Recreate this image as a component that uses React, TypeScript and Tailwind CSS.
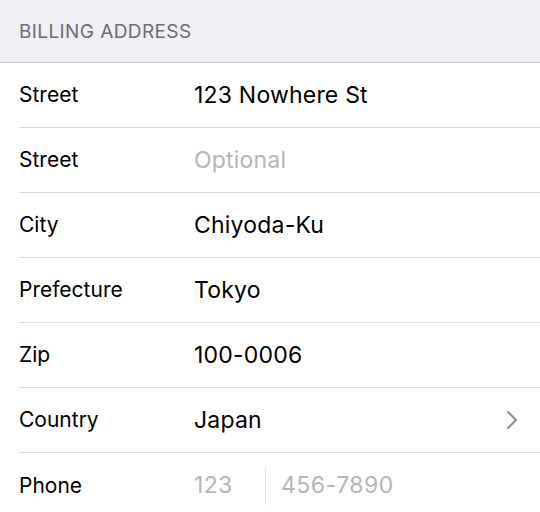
import React from "react";

const rows: { label: string; value?: string; placeholder?: string; chevron?: boolean; phone?: boolean }[] = [
  { label: "Street", value: "123 Nowhere St" },
  { label: "Street", placeholder: "Optional" },
  { label: "City", value: "Chiyoda-Ku" },
  { label: "Prefecture", value: "Tokyo" },
  { label: "Zip", value: "100-0006" },
  { label: "Country", value: "Japan", chevron: true },
  { label: "Phone", phone: true },
];

export default function App() {
  return (
    <div
      className="w-[540px] h-[512px] overflow-hidden bg-white"
      style={{ fontFamily: 'Inter, "Liberation Sans", Arial, sans-serif' }}
    >
      <div className="h-[63px] bg-[#efeff4] border-b border-[#c8c7cc] flex items-end pb-[21px] pl-[19px]">
        <span className="text-[19px] leading-none text-[#6d6d72] tracking-[0.4px]">BILLING ADDRESS</span>
      </div>
      <div className="pl-[19px]">
        {rows.map((r, i) => (
          <div
            key={i}
            className={`h-[65px] flex items-center pr-[22px] ${i < rows.length - 1 ? "border-b border-[#dcdcdf]" : ""}`}
          >
            <div className="w-[175px] text-[21px] text-black">{r.label}</div>
            {r.phone ? (
              <div className="flex items-center flex-1 h-full">
                <span className="text-[23px] text-[#b4b4b9] w-[71px] tracking-[0.3px]">123</span>
                <div className="w-px h-[38px] bg-[#e0e0e0] mr-[15px]"></div>
                <span className="text-[23px] text-[#b4b4b9] tracking-[0.5px]">456-7890</span>
              </div>
            ) : (
              <div className="flex-1 text-[23px] tracking-[0.2px]">
                {r.value ? (
                  <span className="text-black">{r.value}</span>
                ) : (
                  <span className="text-[#b4b4b9]">{r.placeholder}</span>
                )}
              </div>
            )}
            {r.chevron && (
              <svg width="12" height="20" viewBox="0 0 12 20" fill="none">
                <path d="M2 2l8 8-8 8" stroke="#8e8e93" strokeWidth="2" strokeLinecap="round" strokeLinejoin="round" />
              </svg>
            )}
          </div>
        ))}
      </div>
    </div>
  );
}
